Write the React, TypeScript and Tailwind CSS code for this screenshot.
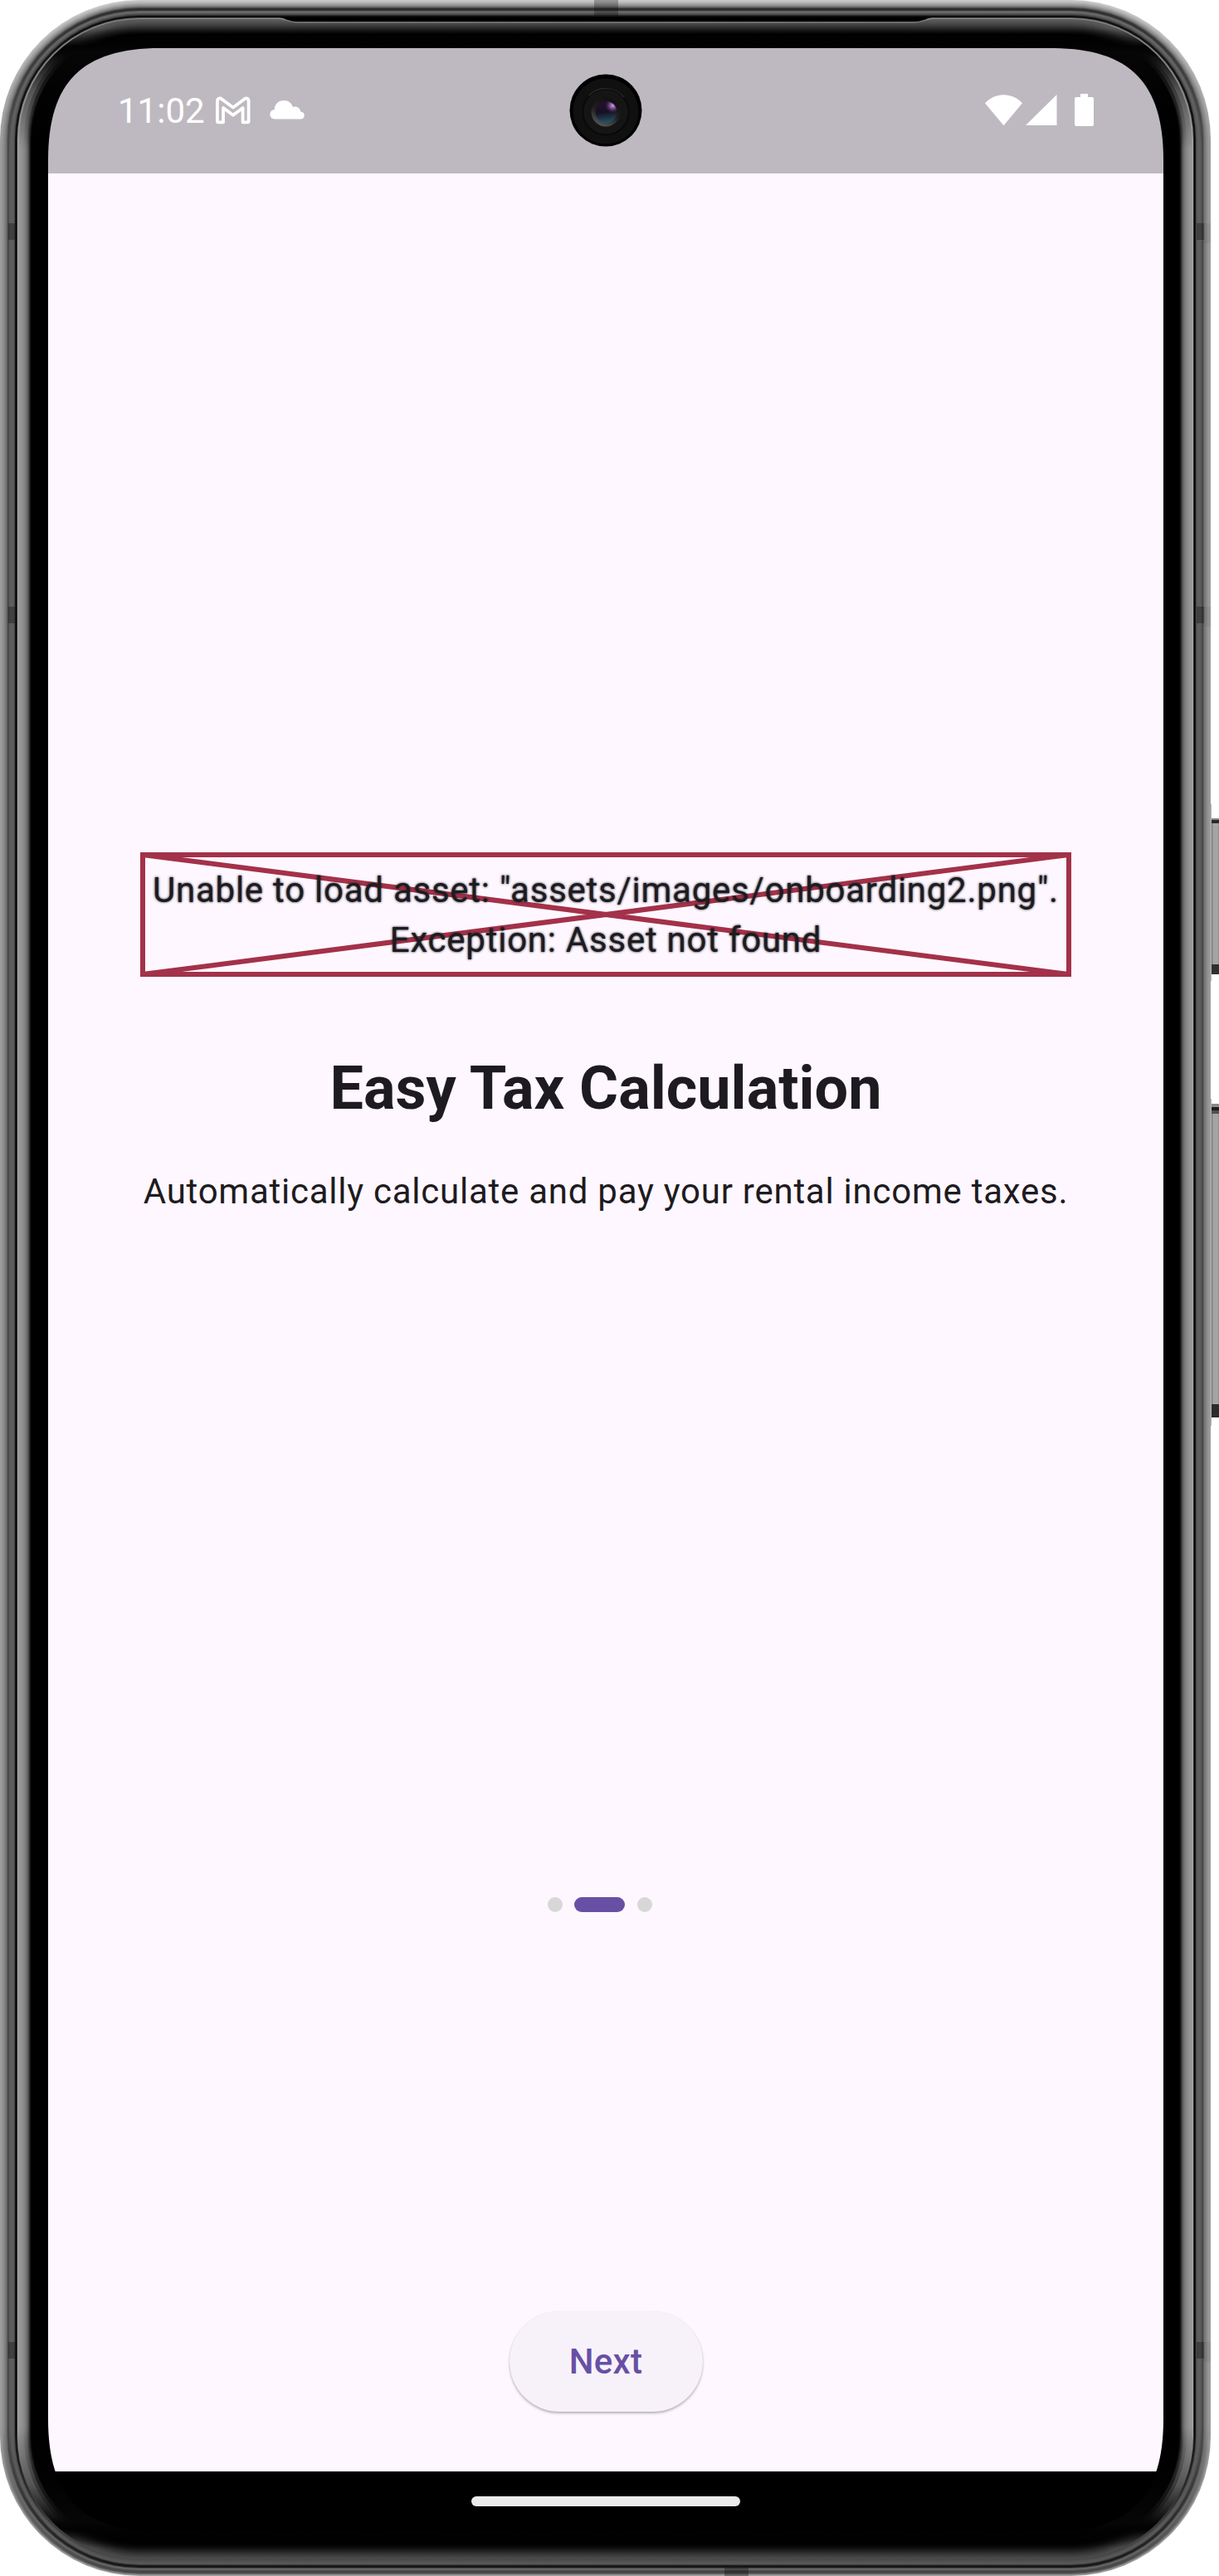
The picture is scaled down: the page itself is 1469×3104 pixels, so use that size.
const W = 1460;
const H = 3104;

// Shade of each one-pixel ring of the bezel, from the outer edge inwards: top, side, bottom.
const RINGS: [string, string, string][] = [
  ['#c9c9c9', '#9c9c9c', '#9a9a9a'],
  ['#c4c4c4', '#9a9a9a', '#858585'],
  ['#bcbcbc', '#969696', '#636363'],
  ['#b2b2b2', '#919191', '#4e4e4e'],
  ['#a8a8a8', '#8b8b8b', '#434343'],
  ['#9c9c9c', '#838383', '#444444'],
  ['#8f8f8f', '#7b7b7b', '#4c4c4c'],
  ['#7f7f7f', '#727272', '#585858'],
  ['#6c6c6c', '#626262', '#6a6a6a'],
  ['#4a4a4a', '#474747', '#4b4b4b'],
  ['#303030', '#4b4b4b', '#1f1f1f'],
  ['#2c2c2c', '#585858', '#151515'],
  ['#363636', '#5c5c5c', '#1b1b1b'],
  ['#5e5e5e', '#5e5e5e', '#3c3c3c'],
  ['#6c6c6c', '#5e5e5e', '#585858'],
  ['#626262', '#5c5c5c', '#585858'],
  ['#565656', '#585858', '#565656'],
  ['#484848', '#4a4a4a', '#545454'],
  ['#2e2e2e', '#161616', '#525252'],
  ['#141414', '#050505', '#505050'],
  ['#060606', '#2a2a2a', '#4d4d4d'],
  ['#5a5a5a', '#a8a8a8', '#4a4a4a'],
  ['#8a8a8a', '#989898', '#464646'],
  ['#5c5c5c', '#989898', '#424242'],
  ['#585858', '#969696', '#3e3e3e'],
  ['#565656', '#939393', '#393939'],
  ['#525252', '#909090', '#343434'],
  ['#4e4e4e', '#8d8d8d', '#2f2f2f'],
  ['#494949', '#898989', '#2a2a2a'],
  ['#444444', '#848484', '#242424'],
  ['#3e3e3e', '#7e7e7e', '#1f1f1f'],
  ['#383838', '#767676', '#1a1a1a'],
  ['#323232', '#6c6c6c', '#151515'],
  ['#2c2c2c', '#5e5e5e', '#101010'],
  ['#262626', '#4a4a4a', '#0c0c0c'],
  ['#202020', '#303030', '#090909'],
  ['#1b1b1b', '#161616', '#060606'],
  ['#161616', '#060606', '#040404'],
  ['#101010', '#020202', '#020202'],
  ['#0a0a0a', '#000000', '#000000'],
  ['#050505', '#000000', '#000000'],
  ['#000000', '#000000', '#000000'],
];

// Corner shade of a glossy inner ring, where its side highlight is half faded.
const cornerShade = (i: number) => (i > 36 ? '#020202' : i > 32 ? '#1a1a1a' : i > 28 ? '#3a3a3a' : '#555555');

function DeviceFrame() {
  return (
    <svg className="pointer-events-none absolute top-0 left-0" width="1469" height="3104" viewBox="0 0 1469 3104" aria-hidden="true">
      <defs>
        {RINGS.map(([t, s, b], i) => (
          <linearGradient key={i} id={`ring${i}`} gradientUnits="userSpaceOnUse" x1="0" y1="0" x2="0" y2={H}>
            <stop offset={(i > 20 ? 34 : 10) / H} stopColor={t} />
            {i > 22 && <stop offset={56 / H} stopColor="#020202" />}
            {i > 22 && <stop offset={64 / H} stopColor="#060606" />}
            {i > 22 && <stop offset={110 / H} stopColor={cornerShade(i)} />}
            <stop offset={180 / H} stopColor={s} />
            <stop offset={(H - 180) / H} stopColor={s} />
            {i > 20 && <stop offset={(H - 110) / H} stopColor={cornerShade(i)} />}
            {i > 20 && <stop offset={(H - 64) / H} stopColor="#060606" />}
            {i > 20 && <stop offset={(H - 56) / H} stopColor="#020202" />}
            <stop offset={(H - (i > 20 ? 34 : 10)) / H} stopColor={BOTTOM[i] ?? b} />
          </linearGradient>
        ))}
        <linearGradient id="key" x1="0" y1="0" x2="1" y2="0">
          <stop offset="0" stopColor="#6a6a6a" />
          <stop offset="0.2" stopColor="#a2a2a2" />
          <stop offset="0.8" stopColor="#a6a6a6" />
          <stop offset="1" stopColor="#8c8c8c" />
        </linearGradient>
      </defs>

      {/* side keys */}
      <rect x="1459" y="969" width="1" height="213" fill="#b4b4b4" />
      <rect x="1460" y="986" width="9" height="188" fill="url(#key)" />
      <rect x="1460" y="986" width="9" height="2" fill="#8a8a8a" />
      <rect x="1460" y="988" width="9" height="4" fill="#2a2a2a" />
      <rect x="1460" y="1162" width="9" height="12" fill="#303030" />
      <rect x="1459" y="1324" width="1" height="394" fill="#b4b4b4" />
      <rect x="1460" y="1330" width="9" height="378" fill="url(#key)" />
      <rect x="1460" y="1330" width="9" height="4" fill="#8a8a8a" />
      <rect x="1460" y="1334" width="9" height="4" fill="#1c1c1c" />
      <rect x="1460" y="1338" width="9" height="4" fill="#505050" />
      <rect x="1460" y="1692" width="9" height="16" fill="#2c2c2c" />

      {/* concentric shells, each covering all but one pixel of the last */}
      {RINGS.map((_, i) => (
        <rect key={i} x={i} y={i} width={W - 1 - 2 * i} height={H - 2 * i} rx={168 - i} fill={`url(#ring${i})`} />
      ))}

      {/* earpiece slot */}
      <path d="M334 20.5 C344 21.5 348 26.5 358 26.5 H1102 C1112 26.5 1116 21.5 1126 20.5 Z" fill="#000" />
      <path d="M334 22.2 C344 22.5 348 26.8 358 26.8 H1102 C1112 26.8 1116 22.5 1126 22.2" fill="none" stroke="#858585" strokeWidth="1.2" />

      {/* antenna bands */}
      <g fill="#000" fillOpacity="0.3">
        {[269, 731, 2822].map((y) => (
          <g key={y}>
            <rect x="10" y={y} width="8" height="20" />
            <rect x="1442" y={y} width="9" height="20" />
            <rect x="1451" y={y} width="8" height="24" fillOpacity="0.05" />
          </g>
        ))}
        <rect x="716" y="0" width="29" height="19" fillOpacity="0.26" />
        <rect x="873" y="3094" width="29" height="10" />
      </g>
    </svg>
  );
}

// Lower edge shades: a thin bright rim, a dark groove, then the glossy glass lip.
const BOTTOM: string[] = [
  '#a0a0a0', '#8c8c8c', '#6a6a6a', '#505050', '#464646', '#464646', '#505050', '#606060', '#6a6a6a', '#444444',
  '#1c1c1c', '#141414', '#1a1a1a', '#3c3c3c', '#565656', '#565656', '#545454', '#525252', '#505050', '#4e4e4e',
  '#4c4c4c',
];

function Camera() {
  return (
    <svg className="absolute top-[31px] left-1/2 -translate-x-1/2" width="88" height="88" viewBox="0 0 88 88" aria-hidden="true">
      <defs>
        <linearGradient id="camRim" x1="0.2" y1="1" x2="0.6" y2="0">
          <stop offset="0" stopColor="#5c5c5c" />
          <stop offset="0.5" stopColor="#202020" />
          <stop offset="1" stopColor="#101010" />
        </linearGradient>
        <linearGradient id="camLens" x1="0.4" y1="0" x2="0.5" y2="1">
          <stop offset="0" stopColor="#25102c" />
          <stop offset="0.5" stopColor="#171022" />
          <stop offset="1" stopColor="#225468" />
        </linearGradient>
        <radialGradient id="camGlow" cx="0.8" cy="0.2" r="0.36">
          <stop offset="0" stopColor="#d9a0ee" />
          <stop offset="0.45" stopColor="#8d5aa6" stopOpacity="0.7" />
          <stop offset="1" stopColor="#3a2050" stopOpacity="0" />
        </radialGradient>
      </defs>
      <circle cx="44" cy="44" r="43.5" fill="#000" />
      <circle cx="44" cy="45" r="39.5" fill="#101010" />
      <circle cx="44" cy="46" r="27.5" fill="#151515" stroke="#070707" strokeWidth="1.5" />
      <path d="M24 26 A28.5 28.5 0 0 1 66 28" fill="none" stroke="#2c2c2c" strokeWidth="1.2" />
      <circle cx="44" cy="46" r="17.5" fill="url(#camRim)" />
      <circle cx="44.5" cy="46" r="13" fill="url(#camLens)" />
      <circle cx="44.5" cy="46" r="13" fill="url(#camGlow)" />
    </svg>
  );
}

function StatusBar() {
  return (
    <header className="relative flex h-[151px] shrink-0 items-start justify-between bg-[#beb9c0] pr-[84px] pl-[84px] text-white">
      <div className="flex items-start">
        <span className="mt-[46px] w-[117px] text-[42px] leading-[60px]">11:02</span>
        <svg className="mt-[58px]" width="44" height="34" viewBox="0 0 44 34" aria-label="Mail">
          <path
            d="M2.9 30.3 V6 C2.9 2.4 6 1.6 8.2 3.4 L21.9 13.6 L35.4 3.4 C37.8 1.6 40.6 2.4 40.6 6 V30.3 Q40.6 31.3 39.6 31.3 H33.6 V14 L21.9 22.7 L10 14 V31.3 H3.9 Q2.9 31.3 2.9 30.3 Z"
            fill="none" stroke="currentColor" strokeWidth="3.8" strokeLinejoin="round"
          />
        </svg>
        <svg className="mt-[62px] ml-[22px]" width="43" height="25" viewBox="0 0 43 25" aria-label="Cloud">
          <path d="M6.3 23.5 C-1.4 23.5 -1.6 12.6 5.8 12 C5.6 5.4 10.8 1 17 1 C22.6 1 26.6 4.4 27.9 9 C31.8 7.2 36.9 9.8 37.2 14.6 C43.4 15 43.2 23.5 37.3 23.5 Z" fill="currentColor" />
        </svg>
      </div>
      <svg className="mt-[54px]" width="132" height="42" viewBox="0 0 132 42" fill="currentColor" aria-label="Wi-Fi, signal and battery">
        <path d="M1 12.3 C13 -1.2 34 -1.2 46 12.3 L23.5 39.3 Z" />
        <path d="M50 39 L87.5 2 V39 Z" />
        <path d="M116 1 H125 V5 H130 Q132 5 132 7 V38 Q132 40 130 40 H111 Q109 40 109 38 V7 Q109 5 111 5 H116 Z" />
      </svg>
      <Camera />
    </header>
  );
}

function AssetError() {
  return (
    <div className="relative mt-[818px] h-[150px] w-[1122px] border-6 border-[#a33149] px-[9px] pt-[10px] text-center text-[42px] leading-[60px] tracking-[0.75px] whitespace-nowrap [text-shadow:0_0_3px_#1d1b20]">
      <svg className="absolute -top-[6px] -left-[6px]" width="1122" height="150" viewBox="0 0 1122 150" aria-hidden="true">
        <path d="M3 3 L1119 147 M1119 3 L3 147" stroke="#a33149" strokeWidth="6" />
      </svg>
      <p className="relative">Unable to load asset: "assets/images/onboarding2.png".</p>
      <p className="relative">Exception: Asset not found</p>
    </div>
  );
}

function PageDots() {
  return (
    <div className="mt-[820px] mr-[15px] flex gap-[14.5px]">
      <span className="size-[18px] rounded-full bg-[#d7d7d7]" />
      <span className="h-[18px] w-[61px] rounded-full bg-[#6750a4]" />
      <span className="size-[18px] rounded-full bg-[#d7d7d7]" />
    </div>
  );
}

export default function App() {
  return (
    <div className="relative h-[3104px] w-[1469px] overflow-hidden bg-white pt-[58px] pl-[58px] font-['Roboto',sans-serif] text-[#1d1b20]">
      <DeviceFrame />
      <div className="relative flex h-[2992px] w-[1344px] flex-col bg-black [clip-path:path('M0_135_C0_41_41_0_135_0_H1209_C1303_0_1344_41_1344_135_V2857_C1344_2951_1303_2992_1209_2992_H135_C41_2992_0_2951_0_2857_Z')]">
        <StatusBar />
        <main className="flex flex-1 flex-col items-center bg-[#fef7ff]">
          <AssetError />
          <h1 className="mt-[87px] text-[72px] leading-[96px] font-bold whitespace-nowrap">Easy Tax Calculation</h1>
          <p className="mt-[46px] text-[42px] leading-[60px] tracking-[0.75px] whitespace-nowrap">
            Automatically calculate and pay your rental income taxes.
          </p>
          <PageDots />
          <button className="mt-[481px] h-[121px] w-[233px] rounded-full bg-[#f7f2fa] pt-px text-[42px] leading-[60px] font-medium tracking-[0.3px] text-[#6750a4] shadow-[0_2px_3px_rgba(0,0,0,0.28),0_0_1px_rgba(0,0,0,0.08)]">
            Next
          </button>
        </main>
        <footer className="flex h-[72px] shrink-0 justify-center bg-black pt-[30px]">
          <span className="h-3 w-[324px] rounded-full bg-[#ebebeb]" />
        </footer>
      </div>
    </div>
  );
}
